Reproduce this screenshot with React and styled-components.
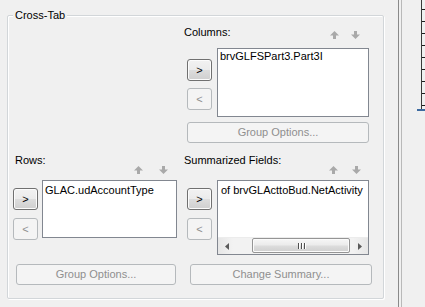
import React from "react";
import styled, { createGlobalStyle } from "styled-components";

const Global = createGlobalStyle`
  html, body { margin: 0; padding: 0; background: #f0f0f0; }
  body { font-family: "Liberation Sans", Arial, sans-serif; font-size: 11px; color: #000; }
  * { box-sizing: border-box; }
`;

const Page = styled.div`
  display: flex;
  width: 425px;
  height: 307px;
  background: #f0f0f0;
  overflow: hidden;
`;

const Main = styled.div`
  width: 398px;
  height: 100%;
  padding: 15px 0 0 7px;
`;

const GroupBox = styled.div`
  position: relative;
  width: 377px;
  height: 284px;
  border: 1px solid #d2d6d9;
  border-radius: 2px;
  box-shadow: 1px 1px 0 #ffffff, inset 1px 1px 0 #ffffff;
  display: grid;
  grid-template-columns: 175px 200px;
  grid-template-rows: 138px 144px;
`;

const Legend = styled.span`
  position: absolute;
  left: 5px;
  top: -7px;
  padding: 0 2px;
  line-height: 13px;
  background: #f0f0f0;
`;

const Pane = styled.div`
  grid-column: ${(p) => p.$col};
  grid-row: ${(p) => p.$row};
  display: flex;
  flex-direction: column;
  align-items: flex-start;
  padding-top: ${(p) => p.$padTop}px;
`;

const Header = styled.div`
  display: flex;
  align-items: flex-start;
  height: ${(p) => p.$h}px;
  padding-left: ${(p) => p.$labelLeft}px;
  width: ${(p) => p.$w}px;
`;

const Label = styled.span`
  line-height: 13px;
`;

const Arrows = styled.div`
  margin-left: auto;
  margin-right: ${(p) => p.$right}px;
  margin-top: ${(p) => p.$top}px;
  display: flex;
  gap: ${(p) => p.$gap}px;
`;

const Body = styled.div`
  display: flex;
  align-items: flex-start;
  margin-left: ${(p) => p.$left}px;
  gap: ${(p) => p.$gap}px;
`;

const ButtonCol = styled.div`
  display: flex;
  flex-direction: column;
  gap: ${(p) => p.$gap}px;
  margin-top: ${(p) => p.$top}px;
`;

const Button = styled.button`
  font-family: "Liberation Sans", Arial, sans-serif;
  font-size: 11px;
  line-height: 13px;
  padding: 0;
  margin: 0;
  width: ${(p) => p.$w}px;
  height: ${(p) => p.$h}px;
  border-radius: 3px;
  display: flex;
  align-items: center;
  justify-content: center;
  color: ${(p) => (p.disabled ? "#8f8f8f" : "#000")};
  border: 1px solid ${(p) => (p.disabled ? "#b5b9bc" : "#707070")};
  background: ${(p) =>
    p.disabled
      ? "#f4f4f4"
      : "linear-gradient(#f2f2f2 0%, #ebebeb 50%, #dddddd 51%, #cfcfcf 100%)"};
  box-shadow: ${(p) => (p.disabled ? "none" : "inset 0 0 0 1px #fcfcfc")};
`;

const WideButton = styled(Button)`
  margin-left: ${(p) => p.$left}px;
  margin-top: ${(p) => (p.$top === "auto" ? "auto" : `${p.$top}px`)};
  margin-bottom: ${(p) => p.$bottom || 0}px;
`;

const ListBox = styled.div`
  width: ${(p) => p.$w}px;
  height: ${(p) => p.$h}px;
  border: 1px solid #828790;
  background: #fff;
  display: flex;
  flex-direction: column;
`;

const ListContent = styled.div`
  flex: 1;
  padding: ${(p) => p.$pt}px 2px 0 ${(p) => p.$pl}px;
  line-height: 13px;
  white-space: nowrap;
  overflow: hidden;
`;

const HScroll = styled.div`
  height: 17px;
  display: flex;
  background: linear-gradient(90deg, #e6e6e6, #f2f2f2 10%, #f2f2f2 90%, #e6e6e6);
  border-top: 1px solid #ececec;
`;

const ScrollArrow = styled.div`
  width: 17px;
  display: flex;
  align-items: center;
  justify-content: center;
`;

const Track = styled.div`
  flex: 1;
  display: flex;
  align-items: stretch;
  padding: 0 0 1px 0;
`;

const Thumb = styled.div`
  margin-left: 17px;
  width: 98px;
  border: 1px solid #959595;
  border-radius: 2px;
  background: linear-gradient(#f6f6f6 0%, #ececec 45%, #dcdcdc 55%, #cfcfcf 100%);
  box-shadow: inset 0 0 0 1px #fbfbfb;
  display: flex;
  align-items: center;
  justify-content: center;
  gap: 2px;
`;

const Grip = styled.span`
  width: 1px;
  height: 6px;
  background: #4f4f4f;
  box-shadow: 1px 0 0 #ffffff;
`;

const Side = styled.div`
  flex: 1;
  height: 100%;
  display: flex;
  border-left: 1px solid #8a8a8a;
`;

const SideInner = styled.div`
  flex: 1;
  margin-left: 2px;
  border-left: 1px solid #b9b9b9;
  display: flex;
  justify-content: flex-end;
`;

const Ruler = styled.div`
  position: relative;
  width: 4px;
  height: 110px;
  border-left: 1px solid #3a3a3a;
  background: repeating-linear-gradient(
    #f0f0f0 0px,
    #f0f0f0 9px,
    #1e1e1e 9px,
    #1e1e1e 10px,
    #f0f0f0 10px,
    #f0f0f0 12px
  );
`;

const RulerMark = styled.span`
  position: absolute;
  right: 0;
  bottom: -1px;
  width: 8px;
  height: 2px;
  background: #3d6aa0;
`;

const MoveArrow = ({ down }) => (
  <svg width="9" height="8" viewBox="0 0 9 8" style={{ display: "block" }}>
    <path
      d="M4.5 0 L9 4.5 L6 4.5 L6 8 L3 8 L3 4.5 L0 4.5 Z"
      fill="#a9a9a9"
      transform={down ? "rotate(180 4.5 4)" : undefined}
    />
  </svg>
);

const Tri = ({ right }) => (
  <svg width="4" height="7" viewBox="0 0 4 7" style={{ display: "block" }}>
    <path d={right ? "M0 0 L4 3.5 L0 7 Z" : "M4 0 L0 3.5 L4 7 Z"} fill="#5a5a5a" />
  </svg>
);

export default function App() {
  return (
    <>
      <Global />
      <Page>
        <Main>
          <GroupBox>
            <Legend>Cross-Tab</Legend>

            <Pane $col={2} $row={1} $padTop={10}>
              <Header $h={22} $labelLeft={1} $w={186}>
                <Label>Columns:</Label>
                <Arrows $right={9} $top={5} $gap={12}>
                  <MoveArrow />
                  <MoveArrow down />
                </Arrows>
              </Header>
              <Body $left={4} $gap={5}>
                <ButtonCol $top={11} $gap={7}>
                  <Button $w={25} $h={22}>&gt;</Button>
                  <Button $w={25} $h={22} disabled>&lt;</Button>
                </ButtonCol>
                <ListBox $w={152} $h={69}>
                  <ListContent $pt={1} $pl={2}>brvGLFSPart3.Part3I</ListContent>
                </ListBox>
              </Body>
              <WideButton $w={182} $h={21} $left={4} $top={5} disabled>
                Group Options...
              </WideButton>
            </Pane>

            <Pane $col={1} $row={2} $padTop={0}>
              <Header $h={26} $labelLeft={7} $w={169}>
                <Label>Rows:</Label>
                <Arrows $right={9} $top={12} $gap={16}>
                  <MoveArrow />
                  <MoveArrow down />
                </Arrows>
              </Header>
              <Body $left={5} $gap={4}>
                <ButtonCol $top={8} $gap={8}>
                  <Button $w={25} $h={22}>&gt;</Button>
                  <Button $w={25} $h={22} disabled>&lt;</Button>
                </ButtonCol>
                <ListBox $w={135} $h={58}>
                  <ListContent $pt={3} $pl={2}>GLAC.udAccountType</ListContent>
                </ListBox>
              </Body>
              <WideButton $w={160} $h={21} $left={8} $top="auto" $bottom={13} disabled>
                Group Options...
              </WideButton>
            </Pane>

            <Pane $col={2} $row={2} $padTop={0}>
              <Header $h={26} $labelLeft={1} $w={186}>
                <Label>Summarized Fields:</Label>
                <Arrows $right={8} $top={12} $gap={14}>
                  <MoveArrow />
                  <MoveArrow down />
                </Arrows>
              </Header>
              <Body $left={4} $gap={5}>
                <ButtonCol $top={8} $gap={8}>
                  <Button $w={25} $h={22}>&gt;</Button>
                  <Button $w={25} $h={22} disabled>&lt;</Button>
                </ButtonCol>
                <ListBox $w={152} $h={75}>
                  <ListContent $pt={3} $pl={3}>of brvGLActtoBud.NetActivity</ListContent>
                  <HScroll>
                    <ScrollArrow>
                      <Tri />
                    </ScrollArrow>
                    <Track>
                      <Thumb>
                        <Grip />
                        <Grip />
                        <Grip />
                      </Thumb>
                    </Track>
                    <ScrollArrow>
                      <Tri right />
                    </ScrollArrow>
                  </HScroll>
                </ListBox>
              </Body>
              <WideButton $w={182} $h={21} $left={7} $top="auto" $bottom={13} disabled>
                Change Summary...
              </WideButton>
            </Pane>
          </GroupBox>
        </Main>
        <Side>
          <SideInner>
            <Ruler>
              <RulerMark />
            </Ruler>
          </SideInner>
        </Side>
      </Page>
    </>
  );
}
